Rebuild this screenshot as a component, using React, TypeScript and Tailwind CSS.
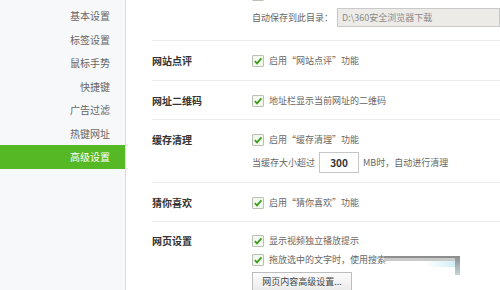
import React from "react";

const menu = ["基本设置", "标签设置", "鼠标手势", "快捷键", "广告过滤", "热键网址", "高级设置"];

function Check() {
  return (
    <span className="w-[12px] h-[12px] shrink-0 border border-[#b9c1b4] bg-[#f3f8ee] rounded-[1px] flex items-center justify-center">
      <svg width="10" height="10" viewBox="0 0 10 10">
        <path d="M1.8 5.2 L4 7.4 L8.4 2.4" fill="none" stroke="#3c9a1c" strokeWidth="1.7" />
      </svg>
    </span>
  );
}

function CheckRow({ text }: { text: string }) {
  return (
    <div className="flex items-center gap-[5px] h-[19px]">
      <Check />
      <span>{text}</span>
    </div>
  );
}

function Section({ label, children, cls }: { label: string; children: React.ReactNode; cls?: string }) {
  return (
    <div className={"flex border-t border-[#ececec] " + (cls || "")}>
      <div className="w-[100px] shrink-0 h-[19px] flex items-center text-[10px] font-bold text-[#333]">{label}</div>
      <div className="flex flex-col">{children}</div>
    </div>
  );
}

export default function App() {
  return (
    <div
      className="w-[500px] h-[290px] overflow-hidden flex bg-white text-[9px] text-[#666]"
      style={{ fontFamily: '"Noto Sans CJK SC", "Noto Sans", sans-serif' }}
    >
      <div className="w-[126px] shrink-0 bg-[#f7f8fa] border-r border-[#dcdcdc] pt-[4px]">
        {menu.map((m, i) => (
          <div
            key={m}
            className={
              "h-[23.5px] flex items-center justify-end pr-[15px] text-[10px] " +
              (i === 6 ? "bg-[#55b824] text-white" : "text-[#666]")
            }
          >
            {m}
          </div>
        ))}
      </div>

      <div className="flex-1 pl-[26px] relative">
        <div className="pl-[100px] mt-[-15px] pb-[13px]">
          <CheckRow text="下载完成后提示用户" />
          <div className="flex items-center h-[19px] mt-[4px]">
            <span>自动保存到此目录：</span>
            <div className="flex-1 ml-[4px] h-[19px] border border-[#c9c9c9] bg-[#ecebe8] text-[#8a8a8a] flex items-center pl-[4px]">
              D:\360安全浏览器下载
            </div>
          </div>
        </div>

        <Section label="网站点评" cls="pt-[10px] pb-[10px]">
          <CheckRow text="启用“网站点评”功能" />
        </Section>

        <Section label="网址二维码" cls="pt-[10px] pb-[9px]">
          <CheckRow text="地址栏显示当前网址的二维码" />
        </Section>

        <Section label="缓存清理" cls="pt-[10px] pb-[9px]">
          <CheckRow text="启用“缓存清理”功能" />
          <div className="flex items-center mt-[3px] h-[21px]">
            <span>当缓存大小超过</span>
            <div className="w-[40px] h-[21px] mx-[4px] border border-[#c6c6c6] bg-white flex items-center justify-center text-[10px] font-bold text-[#333]">
              300
            </div>
            <span>MB时，自动进行清理</span>
          </div>
        </Section>

        <Section label="猜你喜欢" cls="pt-[10px] pb-[9px]">
          <CheckRow text="启用“猜你喜欢”功能" />
        </Section>

        <Section label="网页设置" cls="pt-[9px]">
          <CheckRow text="显示视频独立播放提示" />
          <CheckRow text="拖放选中的文字时，使用搜索" />
          <div className="mt-[3px] w-[100px] h-[19px] border border-[#bdbdbd] bg-gradient-to-b from-[#fbfbfb] to-[#ececec] flex items-center justify-center text-[9px] text-[#444]">
            网页内容高级设置...
          </div>
        </Section>

        <div className="absolute left-[258px] top-[256px] w-[72px] h-[2px] bg-[#8e8e8e]" />
        <div className="absolute left-[258px] top-[258px] w-[72px] h-[3px] bg-[#c9c9c9]" />
        <div className="absolute left-[300px] top-[261px] w-[30px] h-[6px] bg-gradient-to-r from-[#ffffff] to-[#cdeef5]" />
        <div className="absolute left-[329px] top-[256px] w-[5px] h-[19px] bg-gradient-to-b from-[#8c8c8c] to-[#c4d6da]" />
      </div>
    </div>
  );
}
